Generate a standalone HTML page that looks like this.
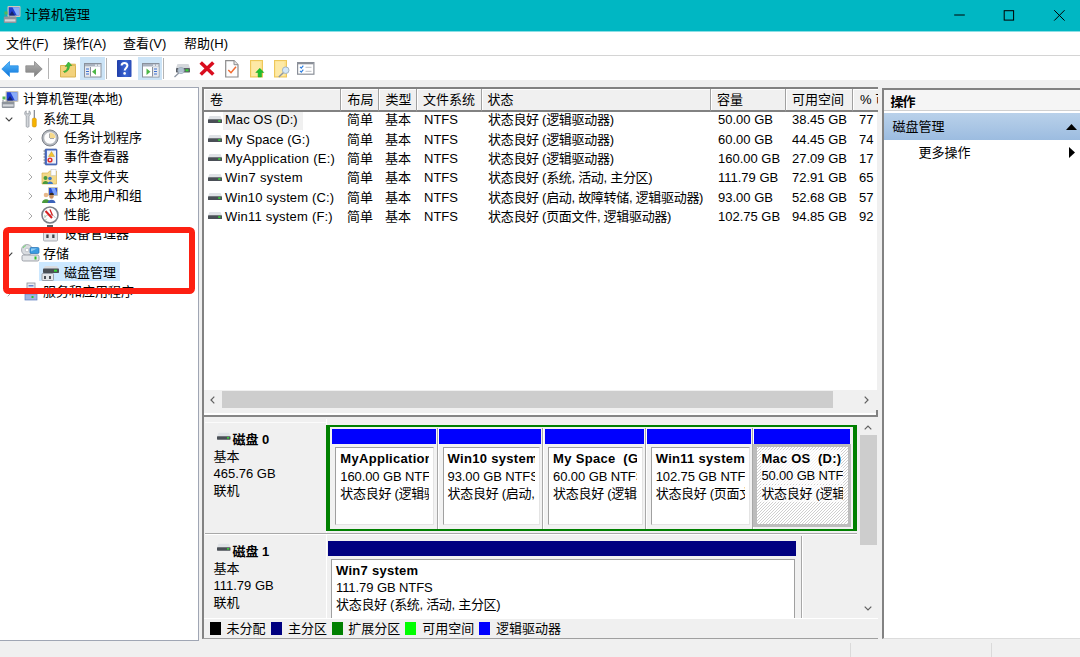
<!DOCTYPE html>
<html lang="zh-CN">
<head>
<meta charset="utf-8">
<title>计算机管理</title>
<style>
*{box-sizing:border-box;margin:0;padding:0}
html,body{width:1080px;height:657px;overflow:hidden;background:#f0f0f0}
body{position:relative;font-family:"Liberation Sans","Noto Sans CJK SC",sans-serif;font-size:13px;color:#000;line-height:1}
.abs,.abs>*{position:absolute}
svg{display:block;overflow:visible}
#title{left:0;top:0;width:1080px;height:32px;background:#00b7c3;border-bottom:1px solid #8cdfe5}
#title .t{left:25px;top:7px;font-size:13px;line-height:15px;white-space:nowrap}
#menu{left:0;top:32px;width:1080px;height:24px;background:#fff;border-bottom:1px solid #d4d4d4}
#menu span{top:4px;font-size:13px;line-height:15px;white-space:nowrap}
#toolbar{left:0;top:56px;width:1080px;height:24px;background:#fff}
#tree{left:0;top:87px;width:199px;height:554px;background:#fff;border:1px solid #a0a6b4;border-left:none}
.tr{height:19px;line-height:19px;white-space:nowrap;font-size:13px}
#main{left:202px;top:87px;width:676px;height:552px;background:#f0f0f0}
#actions{left:882.4px;top:87.5px;width:197.6px;height:551.5px;background:#fff;border-left:2px solid #828282;border-top:2px solid #828282;border-bottom:1px solid #dcdcdc}
#status{left:0;top:641px;width:1080px;height:16px;background:#f0f0f0}
#redbox{left:3.4px;top:227px;width:191.3px;height:66.8px;border:6.5px solid #fd2012;border-radius:5.5px}
.hd{top:2px;height:22.6px;background:#f0f0f0;border-right:1px solid #a0a0a0;border-bottom:2px solid #828282;box-shadow:inset 1px 1px 0 #fff;line-height:22px;padding-left:6px;white-space:nowrap;overflow:hidden}
.c{position:absolute;white-space:nowrap;height:19px;line-height:19px}
.ws{letter-spacing:-0.3px}
.pb{white-space:pre}
</style>
</head>
<body>
<div id="title" class="abs"><svg width="17.5" height="17" viewBox="0 0 17.5 17" style="left:3px;top:5.500px"><rect x="4.5" y="0" width="13" height="11" rx="1" fill="#cfc9b8"/><rect x="5.7" y="1.2" width="10.6" height="8.3" fill="#1f3fd0"/><path d="M9.5 1.2h6.800v8.300h-2.500z" fill="#9ec0ff" opacity=".85"/><path d="M6 9.500l3-4.5 3 4.500z" fill="#16246e"/><rect x=".8" y="10.5" width="12.7" height="6.5" rx="1" fill="#8e949c"/><rect x="1.8" y="13.3" width="10.7" height="2.2" fill="#d5d8dc"/><rect x="1.5" y="5.5" width="3" height="3" fill="#58b558"/><path d="M2 9v1.500M6.5 9.500v1" stroke="#7d838b" stroke-width="1"/></svg><span class="t">计算机管理</span><svg width="140" height="31" viewBox="0 0 140 31" style="left:940px;top:0"><path d="M14.2 15h10.6" stroke="#000" stroke-width="1" fill="none"/><rect x="64.2" y="10.7" width="9.4" height="9.4" stroke="#000" stroke-width="1" fill="none"/><path d="M114.2 10.200l10.4 10.400M124.6 10.200l-10.4 10.4" stroke="#000" stroke-width="1" fill="none"/></svg></div>
<div id="menu" class="abs"><span style="left:6px">文件(F)</span><span style="left:63px">操作(A)</span><span style="left:123px">查看(V)</span><span style="left:184px">帮助(H)</span></div>
<div id="toolbar" class="abs"><div style="left:80px;top:1px;width:25px;height:23px;background:#cce4f7"></div><div style="left:138px;top:1px;width:24px;height:23px;background:#cce4f7"></div><div style="left:48px;top:2px;width:1px;height:21px;background:#b4b4b4"></div><div style="left:106px;top:2px;width:1px;height:21px;background:#b4b4b4"></div><div style="left:163px;top:2px;width:1px;height:21px;background:#b4b4b4"></div><svg width="18" height="16" viewBox="0 0 18 16" style="left:1px;top:5px"><defs><linearGradient id="gb" x1="0" y1="0" x2="0" y2="1"><stop offset="0" stop-color="#5bc0ff"/><stop offset="1" stop-color="#0a6fd8"/></linearGradient><linearGradient id="gg" x1="0" y1="0" x2="0" y2="1"><stop offset="0" stop-color="#b5b5b5"/><stop offset="1" stop-color="#7d7d7d"/></linearGradient></defs><path d="M8.5 0.5L0.8 8l7.7 7.5v-4.3h8.7V4.8H8.5z" fill="url(#gb)" stroke="#2b8fe6" stroke-width=".8"/></svg><svg width="18" height="16" viewBox="0 0 18 16" style="left:25px;top:5px"><path d="M9.5 0.5L17.2 8l-7.7 7.5v-4.3H0.8V4.8h8.7z" fill="url(#gg)" stroke="#8a8a8a" stroke-width=".8"/></svg><svg width="16" height="17" viewBox="0 0 16 17" style="left:60px;top:5px"><path d="M0.5 4.5h15v11.5h-15z" fill="#f3d27c" stroke="#d9b352" stroke-width="1"/><path d="M0.5 4.5h6l1.5-1.5h7.5v1.5" fill="#e9c466" stroke="#d9b352" stroke-width=".6"/><path d="M3.5 10.5c3-.5 4-3 4-5.5l-2.2 .5 3.2-4.5 3.2 3.5-2.2 .3c0 3.5-2 6-5 6.700z" fill="#3fbf3f" stroke="#2a9a2a" stroke-width=".6"/></svg><svg width="17.5" height="14.5" viewBox="0 0 17.5 14.5" style="left:84px;top:7px"><rect x=".5" y=".5" width="16.5" height="13.5" fill="#fff" stroke="#8a919c" stroke-width="1"/><rect x="1" y="1" width="15.5" height="2.5" fill="#aab2bf"/><rect x="11" y="1.5" width="2" height="1.5" fill="#e4e8ee"/><rect x="14" y="1.5" width="2" height="1.5" fill="#e4e8ee"/><rect x="1" y="4" width="5" height="9.5" fill="#e6e9ee"/><path d="M6.5 4v9.5" stroke="#8a919c"/><path d="M2 6h3M2 8.500h3M2 11h3" stroke="#3b6fd0" stroke-width="1"/><path d="M12 5.500v6.500l-4-3.250z" fill="#4cb748"/></svg><svg width="15" height="17" viewBox="0 0 15 17" style="left:117.200px;top:4px"><defs><linearGradient id="gh" x1="0" y1="0" x2="1" y2="0"><stop offset="0" stop-color="#1f3da8"/><stop offset=".6" stop-color="#3a66d4"/><stop offset="1" stop-color="#2a4cb8"/></linearGradient></defs><rect x="0" y="0" width="14.5" height="17" rx=".8" fill="url(#gh)"/><path d="M4.6 5.600c0-3.6 5.8-3.6 5.8 0 0 2.3-2.7 2.4-2.7 5" stroke="#fff" stroke-width="2" fill="none"/><circle cx="7.6" cy="13.4" r="1.3" fill="#fff"/></svg><svg width="17.5" height="14.5" viewBox="0 0 17.5 14.5" style="left:142px;top:7px"><rect x=".5" y=".5" width="16.5" height="13.5" fill="#fff" stroke="#8a919c" stroke-width="1"/><rect x="1" y="1" width="15.5" height="2.5" fill="#aab2bf"/><rect x="11" y="1.5" width="2" height="1.5" fill="#e4e8ee"/><rect x="14" y="1.5" width="2" height="1.5" fill="#e4e8ee"/><rect x="11" y="4" width="5.5" height="9.5" fill="#e6e9ee"/><path d="M10.5 4v9.5" stroke="#8a919c"/><path d="M12 6h3M12 8.500h3M12 11h3" stroke="#3b6fd0" stroke-width="1"/><path d="M4.5 5.500v6.500l4-3.250z" fill="#4cb748"/></svg><svg width="17" height="15" viewBox="0 0 17 15" style="left:173.500px;top:6.500px"><path d="M3.5 1h11l1.5 4h-14z" fill="#d5d8dc"/><rect x="2" y="5" width="14" height="4.5" rx=".7" fill="#5a5f66"/><rect x="11.5" y="6.3" width="3" height="2" fill="#35d435"/><circle cx="7" cy="7.5" r="3.2" fill="#cfe2f4" fill-opacity=".75" stroke="#9aa7b5" stroke-width=".8"/><path d="M4.8 10l-4.3 4" stroke="#8d96a3" stroke-width="1.3"/></svg><svg width="16" height="15" viewBox="0 0 16 15" style="left:199px;top:5px"><path d="M1.7 1.500l12.6 12M14.3 1.500l-12.6 12" stroke="#d90d1e" stroke-width="3.6" fill="none"/></svg><svg width="14" height="18" viewBox="0 0 14 18" style="left:225px;top:4px"><path d="M.7 .7h8.300l4 4v12.300h-12.300z" fill="#fdfdfd" stroke="#8c8c8c" stroke-width="1.2"/><path d="M9 .7v4h4" fill="#e6e6e6" stroke="#8c8c8c" stroke-width="1"/><path d="M3.3 10l2.7 2.7 5-6" stroke="#f26a2e" stroke-width="1.5" fill="none"/></svg><svg width="15" height="18" viewBox="0 0 15 18" style="left:249.500px;top:4px"><rect x=".5" y=".5" width="12" height="16.5" fill="#fbe08a" stroke="#eec75a" stroke-width="1"/><rect x="1.5" y="1.5" width="9" height="14.5" fill="#fde9a6"/><path d="M9.8 8.300l4 4.200h-2.300v4.500h-3.400v-4.500h-2.300z" fill="#1fc02b" stroke="#14a01e" stroke-width=".5"/></svg><svg width="16" height="18" viewBox="0 0 16 18" style="left:273.500px;top:4px"><rect x=".5" y=".5" width="12" height="16.5" fill="#fbe08a" stroke="#eec75a" stroke-width="1"/><rect x="1.5" y="1.5" width="9" height="14.5" fill="#fde9a6"/><circle cx="11.7" cy="10.2" r="3.3" fill="#d3e7f8" stroke="#a3b4c4" stroke-width="1"/><path d="M9.3 12.800l-4.5 4.2" stroke="#8d96a3" stroke-width="1.5"/></svg><svg width="18" height="13" viewBox="0 0 18 13" style="left:297px;top:6px"><rect x=".6" y=".6" width="16.3" height="11.6" fill="#fff" stroke="#8a8f98" stroke-width="1.2"/><rect x="1" y="1" width="15.5" height="1.3" fill="#8a8f98"/><path d="M3 4.800l1.3 1.3 2-2.500M3 8.800l1.3 1.3 2-2.5" stroke="#2f7fe0" stroke-width="1.2" fill="none"/><path d="M8.5 5.300h6M8.5 9.300h6" stroke="#c9ccd1" stroke-width="1.2"/></svg></div>
<div id="tree" class="abs"><svg width="17.5" height="17" viewBox="0 0 17.5 17" style="left:1px;top:2.50px"><rect x="4.5" y="0" width="13" height="11" rx="1" fill="#cfc9b8"/><rect x="5.7" y="1.2" width="10.6" height="8.3" fill="#1f3fd0"/><path d="M9.5 1.2h6.800v8.300h-2.500z" fill="#9ec0ff" opacity=".85"/><path d="M6 9.500l3-4.5 3 4.500z" fill="#16246e"/><rect x=".8" y="10.5" width="12.7" height="6.5" rx="1" fill="#8e949c"/><rect x="1.8" y="13.3" width="10.7" height="2.2" fill="#d5d8dc"/><rect x="1.5" y="5.5" width="3" height="3" fill="#58b558"/><path d="M2 9v1.500M6.5 9.500v1" stroke="#7d838b" stroke-width="1"/></svg><span class="tr" style="left:23px;top:0.90px">计算机管理(本地)</span><svg width="8" height="5" viewBox="0 0 8 5" style="left:5px;top:29.05px"><path d="M.7 .7l3.3 3.3 3.3-3.3" stroke="#404040" stroke-width="1.1" fill="none"/></svg><svg width="13" height="17.5" viewBox="0 0 13 17.5" style="left:23.5px;top:21.50px"><path d="M2.2 .8c-2 1-2 4 0 5v10.500c0 1.3 2.8 1.3 2.8 0v-10.500c2-1 2-4 0-5v3h-2.800z" fill="#d3d6da" stroke="#8a8f98" stroke-width=".7"/><rect x="8.3" y="8" width="4" height="9" rx="1.5" fill="#f5b301" stroke="#c98600" stroke-width=".5"/><rect x="9.7" y="0" width="1.3" height="8" fill="#8a8f98"/></svg><span class="tr" style="left:43px;top:20.75px">系统工具</span><svg width="5" height="8" viewBox="0 0 5 8" style="left:27.5px;top:46.50px"><path d="M.7 .7l3.3 3.3-3.3 3.3" stroke="#a8a8a8" stroke-width="1" fill="none"/></svg><svg width="18" height="18" viewBox="0 0 18 18" style="left:41px;top:40.50px"><circle cx="9" cy="9" r="8" fill="#b4b8be" stroke="#7d828a" stroke-width="1"/><circle cx="9" cy="9" r="6.2" fill="#fdfdfd" stroke="#9da2a9" stroke-width=".6"/><path d="M9 9l0-4.5 M9 9h4v0" stroke="#555" stroke-width="1" fill="none"/><path d="M9 9V3.500A5.5 5.5 0 0 1 14.5 9z" fill="#f6d98a"/></svg><span class="tr" style="left:64px;top:40.00px">任务计划程序</span><svg width="5" height="8" viewBox="0 0 5 8" style="left:27.5px;top:65.75px"><path d="M.7 .7l3.3 3.3-3.3 3.3" stroke="#a8a8a8" stroke-width="1" fill="none"/></svg><svg width="17" height="18" viewBox="0 0 17 18" style="left:42px;top:59.75px"><rect x="3" y="1" width="12" height="16" rx="1" fill="#4f6fc4" stroke="#34509c" stroke-width=".6"/><rect x="5" y="2.5" width="9" height="13" fill="#eef1f7"/><path d="M3 3h-1.500M3 6h-1.500M3 9h-1.500M3 12h-1.500M3 15h-1.5" stroke="#6a6f78" stroke-width="1"/><path d="M9.5 3.500l3 5h-6z" fill="#f4c430" stroke="#b8901c" stroke-width=".4"/><circle cx="8" cy="12" r="2.6" fill="#e03232"/><path d="M7 11l2 2M9 11l-2 2" stroke="#fff" stroke-width=".8"/></svg><span class="tr" style="left:64px;top:59.25px">事件查看器</span><svg width="5" height="8" viewBox="0 0 5 8" style="left:27.5px;top:85.00px"><path d="M.7 .7l3.3 3.3-3.3 3.3" stroke="#a8a8a8" stroke-width="1" fill="none"/></svg><svg width="17" height="17" viewBox="0 0 17 17" style="left:41px;top:79.50px"><path d="M1 5h6l1.5-2h7v13h-14.500z" fill="#f3d98a" stroke="#d9b352" stroke-width=".7"/><rect x="10" y="1.5" width="5" height="6" fill="#fdfdfd" stroke="#b9bdc3" stroke-width=".5"/><circle cx="4.5" cy="10" r="2" fill="#4a9a3c"/><path d="M1.5 16c0-4 6-4 6 0z" fill="#4a9a3c"/><circle cx="9" cy="10.5" r="1.8" fill="#3b79c9"/><path d="M6.5 16c0-3.5 5.5-3.5 5.5 0z" fill="#3b79c9"/></svg><span class="tr" style="left:64px;top:78.50px">共享文件夹</span><svg width="5" height="8" viewBox="0 0 5 8" style="left:27.5px;top:104.25px"><path d="M.7 .7l3.3 3.3-3.3 3.3" stroke="#a8a8a8" stroke-width="1" fill="none"/></svg><svg width="18" height="18" viewBox="0 0 18 18" style="left:41px;top:98.25px"><rect x="7" y="1" width="10" height="9" rx="1" fill="#c9c4b4"/><rect x="8" y="2" width="8" height="7" fill="#2a4fd6"/><path d="M10 2h4l2 5v2h-3z" fill="#8fb4ff" opacity=".8"/><circle cx="5" cy="9" r="2.3" fill="#e8b88a"/><path d="M1 17c0-5 8-5 8 0z" fill="#4a9a3c"/><circle cx="10.5" cy="10.5" r="2.2" fill="#c98e5e"/><path d="M6.5 17c0-4.5 8-4.5 8 0z" fill="#3b62b9"/><path d="M8.5 9a2.2 2.2 0 0 1 4.4 0z" fill="#3a2a1a"/></svg><span class="tr" style="left:64px;top:97.75px">本地用户和组</span><svg width="5" height="8" viewBox="0 0 5 8" style="left:27.5px;top:123.50px"><path d="M.7 .7l3.3 3.3-3.3 3.3" stroke="#a8a8a8" stroke-width="1" fill="none"/></svg><svg width="18" height="18" viewBox="0 0 18 18" style="left:41px;top:117.50px"><circle cx="9" cy="9" r="8" fill="#fdfdfd" stroke="#7a7f88" stroke-width="1.6"/><path d="M3.5 12a6 6 0 0 1 11 0" stroke="#b9bdc3" stroke-width="1" fill="none"/><path d="M4.5 5l6.5 7" stroke="#d62020" stroke-width="2"/><path d="M9 3.500l2.5 6" stroke="#d62020" stroke-width="1.3"/><path d="M3.5 10l.8 0M5 13.500l.6-.6" stroke="#2a9a2a" stroke-width="1"/></svg><span class="tr" style="left:64px;top:117.00px">性能</span><svg width="17" height="17" viewBox="0 0 17 17" style="left:42px;top:137.25px"><rect x="5" y="0" width="6" height="2.5" fill="#5a5f66"/><rect x="1.5" y="5" width="14" height="11" rx="1" fill="#e4e6e9" stroke="#9a9fa8" stroke-width=".8"/><rect x="4.3" y="9.5" width="2.3" height="3.5" fill="#3f444b"/><rect x="10.2" y="9.5" width="2.3" height="3.5" fill="#3f444b"/></svg><span class="tr" style="left:64px;top:136.25px">设备管理器</span><svg width="8" height="5" viewBox="0 0 8 5" style="left:5px;top:163.80px"><path d="M.7 .7l3.3 3.3 3.3-3.3" stroke="#404040" stroke-width="1.1" fill="none"/></svg><svg width="19" height="18" viewBox="0 0 19 18" style="left:21px;top:156.00px"><circle cx="6" cy="6" r="5.5" fill="#d9dce0" stroke="#9aa0a8" stroke-width=".8"/><circle cx="6" cy="6" r="1.8" fill="#fff" stroke="#9aa0a8" stroke-width=".5"/><path d="M2 4a4.5 4.5 0 0 1 3-2.5" stroke="#7fd37f" stroke-width="1.2" fill="none"/><rect x="9" y="3.5" width="9" height="6" rx="1.2" fill="#3b9be0" stroke="#1f6fb5" stroke-width=".7"/><path d="M10 4.500h6l-6 3z" fill="#a9d8f8" opacity=".8"/><rect x="1" y="11" width="17" height="6" rx="1.5" fill="#e4e6e9" stroke="#8a8f98" stroke-width=".8"/><rect x="13.5" y="12.5" width="2" height="3" fill="#2fc02f"/></svg><span class="tr" style="left:43px;top:155.50px">存储</span><div style="left:39.2px;top:173.75px;width:80.5px;height:19px;background:#cce8ff"></div><svg width="19" height="17" viewBox="0 0 19 17" style="left:41px;top:175.75px"><path d="M4 2h12l2 3.500h-16z" fill="#d9dce0"/><rect x="2" y="4.5" width="16" height="4.5" rx=".8" fill="#4a4f56"/><rect x="13" y="5.7" width="3" height="2" fill="#35d435"/><rect x="1" y="9.5" width="11.5" height="7" rx=".8" fill="#e4e6e9" stroke="#8a8f98" stroke-width=".8"/><rect x="3" y="12" width="2" height="3" fill="#4a4f56"/><rect x="8" y="12" width="2" height="3" fill="#4a4f56"/></svg><span class="tr" style="left:64px;top:174.75px">磁盘管理</span><svg width="5" height="8" viewBox="0 0 5 8" style="left:6.5px;top:200.50px"><path d="M.7 .7l3.3 3.3-3.3 3.3" stroke="#a8a8a8" stroke-width="1" fill="none"/></svg><svg width="16" height="17" viewBox="0 0 16 17" style="left:23px;top:195.00px"><rect x="4" y="0" width="8" height="14" fill="#e9ecf0" stroke="#8a8f98" stroke-width=".8"/><rect x="5.5" y="2" width="5" height="1.5" fill="#6a86c9"/><rect x="5.5" y="5" width="5" height="1.5" fill="#9aa0a8"/><rect x="2" y="11" width="12" height="6" fill="#9fb6e3" stroke="#5f7fbf" stroke-width=".7"/><rect x="8.5" y="13" width="2" height="2" fill="#2fc02f"/></svg><span class="tr" style="left:43px;top:194.00px">服务和应用程序</span></div>
<div id="main" class="abs"><div style="left:0;top:.4px;width:676px;height:551.6px;border:2px solid #828282;border-right:none;border-bottom:1px solid #a0a0a0"></div><div style="left:2px;top:2px;width:673px;height:301px;background:#fff"></div><div class="hd" style="left:2px;width:136.5px">卷</div><div class="hd" style="left:138.5px;width:38px;padding-left:7px">布局</div><div class="hd" style="left:176.5px;width:38.5px;padding-left:7px">类型</div><div class="hd" style="left:215px;width:64.5px">文件系统</div><div class="hd" style="left:279.5px;width:229.5px">状态</div><div class="hd" style="left:509px;width:75px">容量</div><div class="hd" style="left:584px;width:67px">可用空间</div><div class="hd" style="left:651px;width:24.5px;border-right:none;padding-left:7px">% 可</div><div style="left:21px;top:24.70px;width:80px;height:18px;background:#f0f0f0"></div><svg width="14" height="6" viewBox="0 0 14 6" style="left:6px;top:29.90px"><path d="M1.5 -1h11l1.5 3.500h-14z" fill="#dfe2e6"/><rect x="0" y="2.2" width="14" height="3.8" rx=".6" fill="#4a4f56"/><rect x="10.2" y="3.2" width="2.3" height="1.6" fill="#35d435"/></svg><span class="c" style="left:23px;top:23.40px;letter-spacing:0.04px">Mac OS (D:)</span><span class="c" style="left:145px;top:23.40px">简单</span><span class="c" style="left:183px;top:23.40px">基本</span><span class="c" style="left:222px;top:23.40px">NTFS</span><span class="c ws" style="left:286px;top:23.40px">状态良好 (逻辑驱动器)</span><span class="c" style="left:516px;top:23.40px">50.00 GB</span><span class="c" style="left:590px;top:23.40px">38.45 GB</span><span class="c" style="left:657px;top:23.40px">77</span><svg width="14" height="6" viewBox="0 0 14 6" style="left:6px;top:49.18px"><path d="M1.5 -1h11l1.5 3.500h-14z" fill="#dfe2e6"/><rect x="0" y="2.2" width="14" height="3.8" rx=".6" fill="#4a4f56"/><rect x="10.2" y="3.2" width="2.3" height="1.6" fill="#35d435"/></svg><span class="c" style="left:23px;top:42.68px;letter-spacing:0.08px">My Space (G:)</span><span class="c" style="left:145px;top:42.68px">简单</span><span class="c" style="left:183px;top:42.68px">基本</span><span class="c" style="left:222px;top:42.68px">NTFS</span><span class="c ws" style="left:286px;top:42.68px">状态良好 (逻辑驱动器)</span><span class="c" style="left:516px;top:42.68px">60.00 GB</span><span class="c" style="left:590px;top:42.68px">44.45 GB</span><span class="c" style="left:657px;top:42.68px">74</span><svg width="14" height="6" viewBox="0 0 14 6" style="left:6px;top:68.46px"><path d="M1.5 -1h11l1.5 3.500h-14z" fill="#dfe2e6"/><rect x="0" y="2.2" width="14" height="3.8" rx=".6" fill="#4a4f56"/><rect x="10.2" y="3.2" width="2.3" height="1.6" fill="#35d435"/></svg><span class="c" style="left:23px;top:61.96px;letter-spacing:0.26px">MyApplication (E:)</span><span class="c" style="left:145px;top:61.96px">简单</span><span class="c" style="left:183px;top:61.96px">基本</span><span class="c" style="left:222px;top:61.96px">NTFS</span><span class="c ws" style="left:286px;top:61.96px">状态良好 (逻辑驱动器)</span><span class="c" style="left:516px;top:61.96px">160.00 GB</span><span class="c" style="left:590px;top:61.96px">27.09 GB</span><span class="c" style="left:657px;top:61.96px">17</span><svg width="14" height="6" viewBox="0 0 14 6" style="left:6px;top:87.74px"><path d="M1.5 -1h11l1.5 3.500h-14z" fill="#dfe2e6"/><rect x="0" y="2.2" width="14" height="3.8" rx=".6" fill="#4a4f56"/><rect x="10.2" y="3.2" width="2.3" height="1.6" fill="#35d435"/></svg><span class="c" style="left:23px;top:81.24px;letter-spacing:0.33px">Win7 system</span><span class="c" style="left:145px;top:81.24px">简单</span><span class="c" style="left:183px;top:81.24px">基本</span><span class="c" style="left:222px;top:81.24px">NTFS</span><span class="c ws" style="left:286px;top:81.24px">状态良好 (系统, 活动, 主分区)</span><span class="c" style="left:516px;top:81.24px">111.79 GB</span><span class="c" style="left:590px;top:81.24px">72.91 GB</span><span class="c" style="left:657px;top:81.24px">65</span><svg width="14" height="6" viewBox="0 0 14 6" style="left:6px;top:107.02px"><path d="M1.5 -1h11l1.5 3.500h-14z" fill="#dfe2e6"/><rect x="0" y="2.2" width="14" height="3.8" rx=".6" fill="#4a4f56"/><rect x="10.2" y="3.2" width="2.3" height="1.6" fill="#35d435"/></svg><span class="c" style="left:23px;top:100.52px;letter-spacing:0.13px">Win10 system (C:)</span><span class="c" style="left:145px;top:100.52px">简单</span><span class="c" style="left:183px;top:100.52px">基本</span><span class="c" style="left:222px;top:100.52px">NTFS</span><span class="c ws" style="left:286px;top:100.52px">状态良好 (启动, 故障转储, 逻辑驱动器)</span><span class="c" style="left:516px;top:100.52px">93.00 GB</span><span class="c" style="left:590px;top:100.52px">52.68 GB</span><span class="c" style="left:657px;top:100.52px">57</span><svg width="14" height="6" viewBox="0 0 14 6" style="left:6px;top:126.30px"><path d="M1.5 -1h11l1.5 3.500h-14z" fill="#dfe2e6"/><rect x="0" y="2.2" width="14" height="3.8" rx=".6" fill="#4a4f56"/><rect x="10.2" y="3.2" width="2.3" height="1.6" fill="#35d435"/></svg><span class="c" style="left:23px;top:119.80px;letter-spacing:0.2px">Win11 system (F:)</span><span class="c" style="left:145px;top:119.80px">简单</span><span class="c" style="left:183px;top:119.80px">基本</span><span class="c" style="left:222px;top:119.80px">NTFS</span><span class="c ws" style="left:286px;top:119.80px">状态良好 (页面文件, 逻辑驱动器)</span><span class="c" style="left:516px;top:119.80px">102.75 GB</span><span class="c" style="left:590px;top:119.80px">94.85 GB</span><span class="c" style="left:657px;top:119.80px">92</span><div style="left:2px;top:303px;width:673px;height:20px;background:#f0f0f0"></div><div style="left:20px;top:304px;width:611px;height:17px;background:#cdcdcd"></div><svg width="5" height="8" viewBox="0 0 5 8" style="left:8px;top:309px"><path d="M4.3 .7l-3.3 3.3 3.3 3.3" stroke="#606060" stroke-width="1.2" fill="none"/></svg><svg width="5" height="8" viewBox="0 0 5 8" style="left:662px;top:309px"><path d="M.7 .7l3.3 3.3-3.3 3.3" stroke="#606060" stroke-width="1.2" fill="none"/></svg><div style="left:2px;top:326px;width:673px;height:2px;background:#fff"></div><div style="left:2px;top:328.4px;width:674px;height:1.6px;background:#868686"></div><div style="left:674px;top:323px;width:2px;height:6px;background:#828282"></div><div style="left:657.5px;top:330px;width:17px;height:201px;background:#f0f0f0"></div><div style="left:657.8px;top:348px;width:16.800px;height:110px;background:#cdcdcd"></div><svg width="8" height="5" viewBox="0 0 8 5" style="left:662px;top:337.5px"><path d="M.7 4.300l3.3-3.3 3.3 3.3" stroke="#606060" stroke-width="1.2" fill="none"/></svg><svg width="8" height="5" viewBox="0 0 8 5" style="left:662px;top:519px"><path d="M.7 .7l3.3 3.3 3.3-3.3" stroke="#606060" stroke-width="1.2" fill="none"/></svg><svg width="14" height="6" viewBox="0 0 14 6" style="left:14.5px;top:346.5px"><path d="M1.5 -1.200h10.500l1.5 3.700h-13.500z" fill="#dfe2e6"/><rect x="0" y="2.2" width="13.5" height="3.5" rx=".6" fill="#4a4f56"/><rect x="10" y="3.1" width="2.2" height="1.5" fill="#35d435"/></svg><span class="c" style="left:30.5px;top:343.3px;font-weight:bold">磁盘 0</span><span class="c" style="left:11.5px;top:360.3px">基本</span><span class="c" style="left:11.5px;top:377.3px">465.76 GB</span><span class="c" style="left:11.5px;top:394.3px">联机</span><svg width="14" height="6" viewBox="0 0 14 6" style="left:14.5px;top:458.29999999999995px"><path d="M1.5 -1.200h10.500l1.5 3.700h-13.500z" fill="#dfe2e6"/><rect x="0" y="2.2" width="13.5" height="3.5" rx=".6" fill="#4a4f56"/><rect x="10" y="3.1" width="2.2" height="1.5" fill="#35d435"/></svg><span class="c" style="left:30.5px;top:455.1px;font-weight:bold">磁盘 1</span><span class="c" style="left:11.5px;top:472.1px">基本</span><span class="c" style="left:11.5px;top:489.1px">111.79 GB</span><span class="c" style="left:11.5px;top:506.1px">联机</span><div style="left:3px;top:334.5px;width:121px;height:1px;background:#fbfbfb"></div><div style="left:123.5px;top:332px;width:1px;height:199px;background:#fff"></div><div style="left:3px;top:446px;width:652px;height:1px;background:#a8a8a8"></div><div style="left:3px;top:447px;width:652px;height:1px;background:#fff"></div><div style="left:124.3px;top:338.4px;width:530.5px;height:105.6px;border-style:solid;border-color:#008000;border-width:2.500px 4.500px 2px 4.500px;background:#f2f2f2"></div><div style="left:130.0px;top:341.7px;width:103.7px;height:15px;background:#0000fe"></div><div style="left:133.3px;top:359.7px;width:99.2px;height:78.500px;background:#fff;border:1.200px solid #a0a0a0;border-right:1px solid #e4e4e4;border-bottom:1px solid #e4e4e4"><div style="position:absolute;left:0;top:0;width:92.8px;height:76px;overflow:hidden"><span class="c pb" style="left:4px;top:1.800px;font-weight:bold;letter-spacing:.3px">MyApplication  (E:)</span><span class="c pb" style="left:4px;top:19px;letter-spacing:-.1px">160.00 GB NTFS</span><span class="c pb ws" style="left:4px;top:36.200px">状态良好 (逻辑驱动器)</span></div></div><div style="left:234.9px;top:341px;width:1px;height:101px;background:#a8a8a8"></div><div style="left:235.9px;top:341px;width:1px;height:101px;background:#fff"></div><div style="left:237.3px;top:341.7px;width:102.2px;height:15px;background:#0000fe"></div><div style="left:240.6px;top:359.7px;width:97.7px;height:78.500px;background:#fff;border:1.200px solid #a0a0a0;border-right:1px solid #e4e4e4;border-bottom:1px solid #e4e4e4"><div style="position:absolute;left:0;top:0;width:91.3px;height:76px;overflow:hidden"><span class="c pb" style="left:4px;top:1.800px;font-weight:bold;letter-spacing:.3px">Win10 system  (C:)</span><span class="c pb" style="left:4px;top:19px;letter-spacing:-.1px">93.00 GB NTFS</span><span class="c pb ws" style="left:4px;top:36.200px">状态良好 (启动, 故障</span></div></div><div style="left:340.4px;top:341px;width:1px;height:101px;background:#a8a8a8"></div><div style="left:341.4px;top:341px;width:1px;height:101px;background:#fff"></div><div style="left:342.8px;top:341.7px;width:99.2px;height:15px;background:#0000fe"></div><div style="left:346.1px;top:359.7px;width:94.7px;height:78.500px;background:#fff;border:1.200px solid #a0a0a0;border-right:1px solid #e4e4e4;border-bottom:1px solid #e4e4e4"><div style="position:absolute;left:0;top:0;width:88.3px;height:76px;overflow:hidden"><span class="c pb" style="left:4px;top:1.800px;font-weight:bold;letter-spacing:.3px">My Space  (G:)</span><span class="c pb" style="left:4px;top:19px;letter-spacing:-.1px">60.00 GB NTFS</span><span class="c pb ws" style="left:4px;top:36.200px">状态良好 (逻辑驱动器)</span></div></div><div style="left:443.0px;top:341px;width:1px;height:101px;background:#a8a8a8"></div><div style="left:444.0px;top:341px;width:1px;height:101px;background:#fff"></div><div style="left:445.4px;top:341.7px;width:103.8px;height:15px;background:#0000fe"></div><div style="left:448.7px;top:359.7px;width:99.3px;height:78.500px;background:#fff;border:1.200px solid #a0a0a0;border-right:1px solid #e4e4e4;border-bottom:1px solid #e4e4e4"><div style="position:absolute;left:0;top:0;width:92.9px;height:76px;overflow:hidden"><span class="c pb" style="left:4px;top:1.800px;font-weight:bold;letter-spacing:.3px">Win11 system  (F:)</span><span class="c pb" style="left:4px;top:19px;letter-spacing:-.1px">102.75 GB NTFS</span><span class="c pb ws" style="left:4px;top:36.200px">状态良好 (页面文件, 逻</span></div></div><div style="left:549.8px;top:341px;width:1px;height:101px;background:#a8a8a8"></div><div style="left:550.8px;top:341px;width:1px;height:101px;background:#fff"></div><div style="left:552.2px;top:341.7px;width:96.2px;height:15px;background:#0000fe"></div><div style="left:551.4px;top:357.3px;width:97.6px;height:82.9px;border:3.500px solid #bcbcbc;border-left-width:4.500px;background:#fff repeating-linear-gradient(135deg,#fff 0,#fff 1.300px,#cfcfcf 1.300px,#cfcfcf 2.120px)"><div style="position:absolute;left:0;top:0;width:85.9px;height:76px;overflow:hidden"><span class="c pb" style="left:4px;top:2.900px;font-weight:bold;letter-spacing:.22px;background:rgba(255,255,255,.7);height:17px;line-height:17px">Mac OS  (D:)</span><span class="c pb" style="left:4px;top:20.100px;letter-spacing:-.15px;background:rgba(255,255,255,.7);height:17px;line-height:17px">50.00 GB NTFS</span><span class="c pb ws" style="left:4px;top:37.300px;background:rgba(255,255,255,.7);height:17px;line-height:17px">状态良好 (逻辑驱动器)</span></div></div><div style="left:126px;top:453.5px;width:468.4px;height:15.500px;background:#000080"></div><div style="left:128.5px;top:471.5px;width:464.5px;height:62px;background:#fff;border:1px solid #a0a0a0;border-bottom:none;overflow:hidden"><span class="c" style="left:4.500px;top:1.600px;font-weight:bold;letter-spacing:.27px">Win7 system</span><span class="c" style="left:4.500px;top:18.600px;letter-spacing:-.08px">111.79 GB NTFS</span><span class="c ws" style="left:4.500px;top:35.800px">状态良好 (系统, 活动, 主分区)</span></div><div style="left:598.8px;top:449px;width:1px;height:82px;background:#a8a8a8"></div><div style="left:599.8px;top:449px;width:1px;height:82px;background:#fff"></div><div style="left:2px;top:531px;width:674px;height:20px;background:#f0f0f0;border-top:1px solid #fff"></div><div style="left:8.0px;top:535px;width:11px;height:12.500px;background:#000"></div><span class="c" style="left:24.5px;top:532px">未分配</span><div style="left:69.0px;top:535px;width:11px;height:12.500px;background:#000080"></div><span class="c" style="left:86.0px;top:532px">主分区</span><div style="left:129.7px;top:535px;width:11px;height:12.500px;background:#008000"></div><span class="c" style="left:146.3px;top:532px">扩展分区</span><div style="left:203.0px;top:535px;width:11px;height:12.500px;background:#00ff00"></div><span class="c" style="left:220.3px;top:532px">可用空间</span><div style="left:277.3px;top:535px;width:11px;height:12.500px;background:#0000fe"></div><span class="c" style="left:294.0px;top:532px">逻辑驱动器</span></div>
<div id="actions" class="abs"><div style="left:0;top:0;width:196px;height:21.500px;background:#f5f5f5;border-bottom:1px solid #d0d0d0"></div><span class="c" style="left:6px;top:2.500px;font-weight:bold;letter-spacing:-1px">操作</span><div style="left:0;top:23.500px;width:196px;height:26.500px;background:linear-gradient(#b9d1ea,#9cbce0)"></div><span class="c" style="left:8px;top:27.500px">磁盘管理</span><svg width="11" height="6" viewBox="0 0 11 6" style="left:182px;top:34.500px"><path d="M0 6l5.5-6 5.5 6z" fill="#000"/></svg><span class="c" style="left:34px;top:53.500px">更多操作</span><svg width="6" height="11" viewBox="0 0 6 11" style="left:185px;top:57.500px"><path d="M0 0l6 5.5-6 5.500z" fill="#000"/></svg></div>
<div id="status" class="abs"><div style="left:850px;top:2px;width:1px;height:14px;background:#dadada"></div><div style="left:991px;top:2px;width:1px;height:14px;background:#dadada"></div></div>
<div id="redbox" class="abs"></div>
</body>
</html>
